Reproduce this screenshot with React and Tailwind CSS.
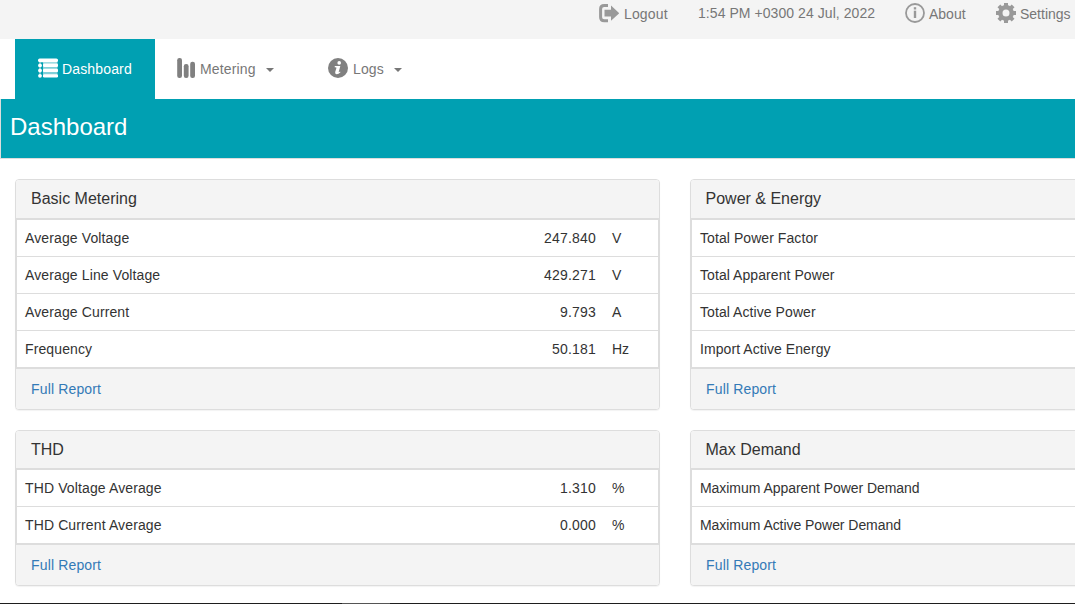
const panels = {
  basic: {
    title: "Basic Metering",
    rows: [
      ["Average Voltage", "247.840", "V"],
      ["Average Line Voltage", "429.271", "V"],
      ["Average Current", "9.793", "A"],
      ["Frequency", "50.181", "Hz"],
    ],
  },
  power: {
    title: "Power & Energy",
    rows: [["Total Power Factor"], ["Total Apparent Power"], ["Total Active Power"], ["Import Active Energy"]],
  },
  thd: {
    title: "THD",
    rows: [
      ["THD Voltage Average", "1.310", "%"],
      ["THD Current Average", "0.000", "%"],
    ],
  },
  demand: {
    title: "Max Demand",
    rows: [["Maximum Apparent Power Demand"], ["Maximum Active Power Demand"]],
  },
};

function Panel({ title, rows, headClass, labelClass }) {
  return (
    <section className="w-[645px] shrink-0 overflow-hidden rounded border border-[#ddd] bg-white shadow-[0_1px_1px_rgba(0,0,0,0.05)]">
      <h3 className={`${headClass} bg-[#f4f4f4] text-base leading-[37px]`}>{title}</h3>
      <div className="border-x border-t-2 border-b border-[#ddd]">
        {rows.map(([label, value, unit]) => (
          <div key={label} className="flex h-[37px] border-b border-[#ddd] px-2 leading-9">
            <span className={`flex-1 ${labelClass}`}>{label}</span>
            <span className="w-20 text-right tracking-[0.2px]">{value}</span>
            <span className="ml-4 w-[38px]">{unit}</span>
          </div>
        ))}
      </div>
      <div className="h-10 bg-[#f4f4f4] px-[15px] leading-10">
        <a className="tracking-[0.15px] text-[#337ab7]">Full Report</a>
      </div>
    </section>
  );
}

function LogoutIcon() {
  return (
    <svg width="20" height="19" viewBox="0 0 20 19" fill="#999">
      <path d="M9 1.6H5.2Q1.6 1.6 1.6 5v8.2q0 3.5 3.6 3.5H9" fill="none" stroke="#999" strokeWidth="3" />
      <path d="M5.5 5.8H12V1.6L20.2 9.2 12 16.8V12.6H5.5Z" />
    </svg>
  );
}

function AboutIcon() {
  return (
    <svg width="20" height="20" viewBox="0 0 20 20" fill="#999">
      <circle cx="10" cy="10" r="9" fill="none" stroke="#999" strokeWidth="1.8" />
      <rect x="8.8" y="4.2" width="2.4" height="2.3" />
      <rect x="8.8" y="7.7" width="2.4" height="7.3" />
    </svg>
  );
}

function GearIcon() {
  return (
    <svg width="20" height="20" viewBox="0 0 20 20" fill="none" stroke="#999">
      <circle cx="10" cy="10" r="5.7" strokeWidth="4.4" />
      <path d="M10 0v3M10 17v3M0 10h3M17 10h3M2.9 2.9l2.2 2.2M14.9 14.9l2.2 2.2M2.9 17.1l2.2-2.2M14.9 5.1l2.2-2.2" strokeWidth="4" />
    </svg>
  );
}

function ListIcon() {
  return (
    <svg width="20" height="20" viewBox="0 0 20 20" fill="#fff">
      <rect x="5" y="1" width="14.5" height="18" opacity="0.5" />
      <rect x="0" y="0.6" width="20" height="3.6" rx="1.7" />
      <rect x="5" y="5.6" width="15" height="3.3" rx="1.2" />
      <rect x="5" y="10.8" width="15" height="3.3" rx="1.2" />
      <rect x="5" y="16.2" width="15" height="3.3" rx="1.2" />
      <rect x="1.2" y="4" width="1.6" height="14" opacity="0.4" />
      <circle cx="2" cy="7.4" r="1.9" />
      <circle cx="2" cy="12.5" r="1.9" />
      <circle cx="2" cy="17.8" r="1.9" />
    </svg>
  );
}

function BarsIcon() {
  return (
    <svg width="19" height="20" viewBox="0 0 19 20" fill="#808080">
      <rect x="0.2" y="0" width="4.8" height="20" rx="2.2" />
      <rect x="6.8" y="6" width="4.8" height="14" rx="2.2" />
      <rect x="13.2" y="3.8" width="4.8" height="16.2" rx="2.2" />
    </svg>
  );
}

function InfoIcon() {
  return (
    <svg width="20" height="20" viewBox="0 0 20 20">
      <circle cx="10" cy="10" r="10" fill="#808080" />
      <circle cx="11.2" cy="4.9" r="1.8" fill="#fff" />
      <path d="M6.8 8H12.3L10.7 14.1Q10.8 14.6 12 13.6L12.5 14.2Q10.5 16.4 8.5 16.3 6.7 15.9 7.2 14.1L8.5 9.7Q8.4 9.1 6.7 9.2Z" fill="#fff" />
    </svg>
  );
}

function Caret() {
  return <span className="mt-0.5 h-0 w-0 border-x-4 border-t-4 border-x-transparent border-t-[#777]" />;
}

export default function App() {
  return (
    <div className="flex h-[604px] w-[1075px] flex-col overflow-hidden bg-white font-['Liberation_Sans',Arial,sans-serif] text-sm text-[#333]">
      <header className="flex h-[39px] shrink-0 bg-[#f4f4f4] pl-[599px] text-[#777]">
        <a className="flex w-[99px] gap-[5px] pt-1 leading-5 tracking-[0.15px]"><LogoutIcon />Logout</a>
        <span className="w-[207px] pt-[3px] leading-5 tracking-[0.06px] whitespace-nowrap">1:54 PM +0300 24 Jul, 2022</span>
        <a className="flex w-[91px] gap-1 pt-[3px] leading-[22px]"><AboutIcon />About</a>
        <a className="flex gap-1 pt-[3px] leading-[22px]"><GearIcon />Settings</a>
      </header>
      <nav className="flex h-[60px] shrink-0 pl-[15px] text-[#777]">
        <a className="flex w-[140px] items-center gap-1 bg-[#00a0b2] pl-[23px] tracking-[0.15px] text-white"><span className="-mt-0.5"><ListIcon /></span>Dashboard</a>
        <a className="flex w-[173px] items-center pl-[22px]"><span className="-mt-0.5 mr-1"><BarsIcon /></span><span className="mr-[10px] tracking-[0.15px]">Metering</span><Caret /></a>
        <a className="flex items-center"><span className="-mt-0.5 mr-[5px]"><InfoIcon /></span><span className="mr-[10px] tracking-[0.15px]">Logs</span><Caret /></a>
      </nav>
      <div className="h-[60px] shrink-0 border-b border-l border-[#ddd] bg-[#00a0b2] pl-[9px]">
        <h1 className="text-2xl leading-[56px] text-white">Dashboard</h1>
      </div>
      <main className="flex h-[444px] shrink-0 flex-col gap-5 pt-5 pl-[15px]">
        <div className="flex gap-[30px]">
          <Panel {...panels.basic} headClass="h-[38px] pl-[15px]" labelClass="tracking-[0.12px]" />
          <Panel {...panels.power} headClass="h-[38px] pl-[14.5px]" labelClass="tracking-[0.07px]" />
        </div>
        <div className="flex gap-[30px]">
          <Panel {...panels.thd} headClass="h-[37px] pl-[15px]" labelClass="tracking-[0.12px]" />
          <Panel {...panels.demand} headClass="h-[37px] pl-[14.5px]" labelClass="tracking-[-0.05px]" />
        </div>
      </main>
      <div className="flex h-px shrink-0 bg-[#1e1e1e] pl-[342px]">
        <span className="w-12 bg-[#555]" />
      </div>
    </div>
  );
}
